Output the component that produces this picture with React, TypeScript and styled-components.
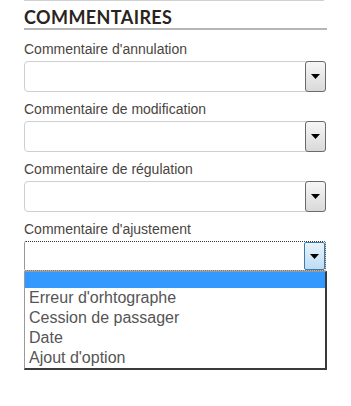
import React from 'react';
import styled, { createGlobalStyle, css } from 'styled-components';

const GlobalStyle = createGlobalStyle`
    html, body {
        margin: 0;
        padding: 0;
        background: #fff;
    }
    body {
        font-family: Arial, "Liberation Sans", sans-serif;
    }
`;

const Panel = styled.section`
    width: 300px;
    margin-left: 24px;
    padding-bottom: 30px;
    border-top: 1px solid #d0d0d0;
`;

const Title = styled.h2`
    margin: 6px 0 0;
    padding-bottom: 0;
    width: 303px;
    font-family: Lato, "Open Sans", sans-serif;
    font-weight: 700;
    font-size: 18px;
    letter-spacing: 0.4px;
    line-height: 21px;
    color: #2a2420;
    border-bottom: 2px solid #b5b5b5;
`;

const Fields = styled.div`
    display: flex;
    flex-direction: column;
    gap: 9px;
    margin-top: 11px;
    width: 302px;
`;

const Field = styled.div`
    display: flex;
    flex-direction: column;
    gap: 4px;
`;

const Label = styled.label`
    font-size: 14px;
    line-height: 16px;
    color: #4a4540;
`;

const SelectBox = styled.div<{ $focused?: boolean }>`
    display: flex;
    justify-content: flex-end;
    height: 31px;
    box-sizing: border-box;
    border: 1px solid #cfcfcf;
    border-radius: 4px;
    background: #fff;
    ${(p) => p.$focused && css`
        border: 1px dotted #333;
        border-radius: 2px;
        height: 30px;
    `}
`;

const ArrowButton = styled.div<{ $focused?: boolean }>`
    display: flex;
    align-items: center;
    justify-content: center;
    width: 21px;
    box-sizing: border-box;
    margin: -1px -1px -1px 0;
    border: 1px solid #6a6a6a;
    border-radius: 3px;
    background: linear-gradient(#f6f6f6, #d9d9d9);
    ${(p) => p.$focused && css`
        margin: 0;
        border-color: #3d7bad;
        border-radius: 2px;
        background: linear-gradient(#e8f3fc, #bfdcf3);
    `}
`;

const Menu = styled.ul`
    margin: 0 -1px 0 0;
    padding: 0;
    list-style: none;
    background: #fff;
    border: 1px solid #9a9a9a;
    border-right: 2px solid #3a3a3a;
    border-bottom: 2px solid #3a3a3a;
`;

const MenuItem = styled.li<{ $active?: boolean }>`
    height: 20px;
    padding-left: 4px;
    font-size: 16px;
    line-height: 20px;
    color: #555;
    ${(p) => p.$active && css`
        height: 16px;
        background: #3399ff;
    `}
`;

const Arrow = () => (
    <svg width="9" height="5" viewBox="0 0 9 5">
        <polygon points="0,0 9,0 4.5,5" fill="#000" />
    </svg>
);

const options = ['Erreur d\'orhtographe', 'Cession de passager', 'Date', 'Ajout d\'option'];

const fields = [
    { label: 'Commentaire d\'annulation' },
    { label: 'Commentaire de modification' },
    { label: 'Commentaire de régulation' },
    { label: 'Commentaire d\'ajustement', open: true }
];

const App: React.FC = () => (
    <>
        <GlobalStyle />
        <Panel>
            <Title>COMMENTAIRES</Title>
            <Fields>
                {fields.map((f) => (
                    <Field key={f.label}>
                        <Label>{f.label}</Label>
                        <div>
                            <SelectBox $focused={f.open}>
                                <ArrowButton $focused={f.open}>
                                    <Arrow />
                                </ArrowButton>
                            </SelectBox>
                            {f.open && (
                                <Menu>
                                    <MenuItem $active />
                                    {options.map((o) => (
                                        <MenuItem key={o}>{o}</MenuItem>
                                    ))}
                                </Menu>
                            )}
                        </div>
                    </Field>
                ))}
            </Fields>
        </Panel>
    </>
);

export default App;
